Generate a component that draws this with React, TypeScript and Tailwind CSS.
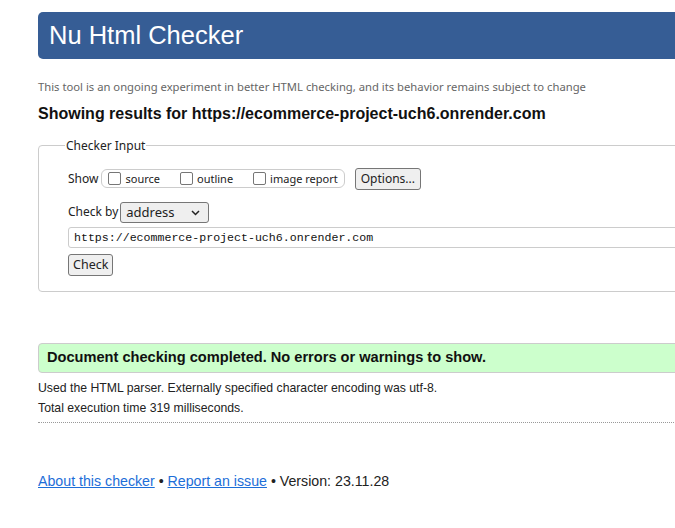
import React from 'react';

const seg = { fontFamily: '"Noto Sans", "Open Sans", sans-serif' };

export default function App() {
  return (
    <div className="w-[675px] h-[528px] overflow-hidden bg-white text-[#222]" style={{ fontFamily: '"Liberation Sans", Arial, sans-serif' }}>
      <div className="ml-[38px] w-[720px] pt-[12px]">
        <header className="h-[47px] bg-[#365d95] rounded-l-[5px] flex items-center pl-[11px]">
          <h1 className="text-white text-[25.5px] leading-none">Nu Html Checker</h1>
        </header>

        <p className="mt-[20px] text-[11.25px] text-[#666]" style={seg}>
          This tool is an ongoing experiment in better HTML checking, and its behavior remains subject to change
        </p>
        <h2 className="mt-[6px] text-[16px] font-bold text-[#111]">
          Showing results for https://ecommerce-project-uch6.onrender.com
        </h2>

        <fieldset className="mt-[11px] border border-[#ccc] rounded-[4px] pl-[29px] pb-[15px] pt-[6px]" style={seg}>
          <legend className="-ml-[3px] px-px text-[12px] text-[#222]">Checker Input</legend>
          <div className="flex items-center mt-[7px] text-[12px]">
            <span>Show</span>
            <div className="ml-[3px] flex items-center h-[19px] border border-[#ccc] rounded-[6px] pl-[6px] pr-[6px] text-[11px]">
              <label className="flex items-center">
                <span className="w-[13px] h-[13px] border border-[#767676] rounded-[2px] bg-white" />
                <span className="ml-[4px]">source</span>
              </label>
              <label className="flex items-center ml-[20px]">
                <span className="w-[13px] h-[13px] border border-[#767676] rounded-[2px] bg-white" />
                <span className="ml-[4px]">outline</span>
              </label>
              <label className="flex items-center ml-[20px]">
                <span className="w-[13px] h-[13px] border border-[#767676] rounded-[2px] bg-white" />
                <span className="ml-[4px]">image report</span>
              </label>
            </div>
            <button className="ml-[10px] h-[22px] px-[5px] border border-[#767676] rounded-[3px] bg-[#efefef] text-[12px]">
              Options...
            </button>
          </div>

          <div className="flex items-center mt-[12px] text-[12px]">
            <span>Check by</span>
            <div className="ml-[2px] w-[89px] h-[21px] border border-[#767676] rounded-[3px] bg-[#efefef] flex items-center justify-between pl-[5px] pr-[8px]">
              <span className="text-[13px]">address</span>
              <svg width="9" height="6" viewBox="0 0 9 6" className="mt-px">
                <path d="M1 1l3.5 3.5L8 1" fill="none" stroke="#222" strokeWidth="1.5" />
              </svg>
            </div>
          </div>
          <div className="mt-[4px] h-[21px] border border-[#ccc] rounded-[3px] flex items-center pl-[5px]">
            <span className="text-[11.6px] text-[#111]" style={{ fontFamily: '"Liberation Mono", "DejaVu Sans Mono", monospace' }}>
              https://ecommerce-project-uch6.onrender.com
            </span>
          </div>
          <button className="mt-[6px] h-[22px] px-[4px] border border-[#767676] rounded-[3px] bg-[#efefef] text-[12.5px]">
            Check
          </button>
        </fieldset>

        <div className="mt-[51px] h-[30px] bg-[#ccffcc] border border-[#ccc] rounded-l-[4px] flex items-center pl-[8px]">
          <span className="text-[14.6px] font-bold text-[#111]">Document checking completed. No errors or warnings to show.</span>
        </div>
        <p className="mt-[5px] text-[12.25px] leading-[20px] text-[#222]">
          Used the HTML parser. Externally specified character encoding was utf-8.
        </p>
        <p className="text-[12.25px] leading-[20px] text-[#222]">Total execution time 319 milliseconds.</p>
        <div className="mt-[4px] border-t border-dotted border-[#999]" />

        <p className="mt-[48px] text-[14.2px] text-[#222]">
          <a className="text-[#1d6ed8] underline">About this checker</a>
          {' • '}
          <a className="text-[#1d6ed8] underline">Report an issue</a>
          {' • Version: 23.11.28'}
        </p>
      </div>
    </div>
  );
}
